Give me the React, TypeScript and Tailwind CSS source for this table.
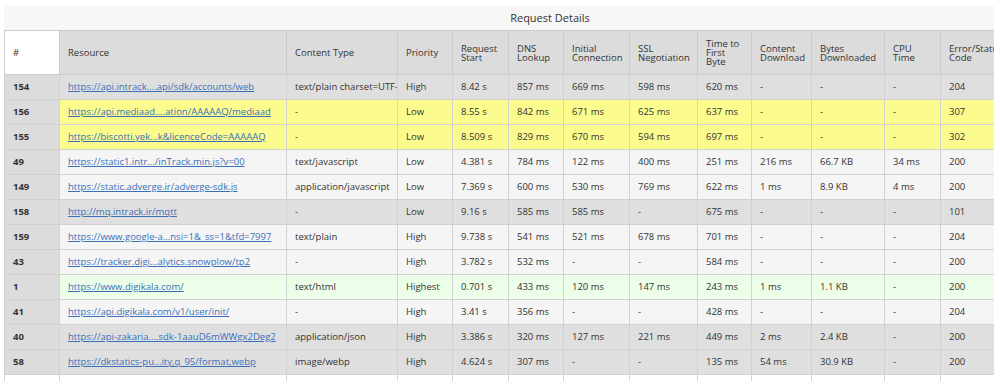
const cols = [
  { label: "#", w: 55 },
  { label: "Resource", w: 227 },
  { label: "Content Type", w: 111 },
  { label: "Priority", w: 55 },
  { label: "Request Start", w: 56 },
  { label: "DNS Lookup", w: 55 },
  { label: "Initial Connection", w: 66 },
  { label: "SSL Negotiation", w: 68 },
  { label: "Time to First Byte", w: 54 },
  { label: "Content Download", w: 60 },
  { label: "Bytes Downloaded", w: 73 },
  { label: "CPU Time", w: 56 },
  { label: "Error/Status Code", w: 156 },
];

type Row = { bg: string; cells: string[] };

const gray = "bg-[#dfdfdf]";
const light = "bg-[#f5f5f5]";
const yellow = "bg-[#fbfb8e]";
const green = "bg-[#ecfde8]";

const rows: Row[] = [
  { bg: gray, cells: ["154", "https://api.intrack....api/sdk/accounts/web", "text/plain charset=UTF-8", "High", "8.42 s", "857 ms", "669 ms", "598 ms", "620 ms", "-", "-", "-", "204"] },
  { bg: yellow, cells: ["156", "https://api.mediaad....ation/AAAAAQ/mediaad", "-", "Low", "8.55 s", "842 ms", "671 ms", "625 ms", "637 ms", "-", "-", "-", "307"] },
  { bg: yellow, cells: ["155", "https://biscotti.yek...k&licenceCode=AAAAAQ", "-", "Low", "8.509 s", "829 ms", "670 ms", "594 ms", "697 ms", "-", "-", "-", "302"] },
  { bg: light, cells: ["49", "https://static1.intr.../inTrack.min.js?v=00", "text/javascript", "Low", "4.381 s", "784 ms", "122 ms", "400 ms", "251 ms", "216 ms", "66.7 KB", "34 ms", "200"] },
  { bg: light, cells: ["149", "https://static.adverge.ir/adverge-sdk.js", "application/javascript", "Low", "7.369 s", "600 ms", "530 ms", "769 ms", "622 ms", "1 ms", "8.9 KB", "4 ms", "200"] },
  { bg: gray, cells: ["158", "http://mq.intrack.ir/mqtt", "-", "Low", "9.16 s", "585 ms", "585 ms", "-", "675 ms", "-", "-", "-", "101"] },
  { bg: light, cells: ["159", "https://www.google-a...nsi=1&_ss=1&tfd=7997", "text/plain", "High", "9.738 s", "541 ms", "521 ms", "678 ms", "701 ms", "-", "-", "-", "204"] },
  { bg: light, cells: ["43", "https://tracker.digi...alytics.snowplow/tp2", "-", "High", "3.782 s", "532 ms", "-", "-", "584 ms", "-", "-", "-", "200"] },
  { bg: green, cells: ["1", "https://www.digikala.com/", "text/html", "Highest", "0.701 s", "433 ms", "120 ms", "147 ms", "243 ms", "1 ms", "1.1 KB", "-", "200"] },
  { bg: light, cells: ["41", "https://api.digikala.com/v1/user/init/", "-", "High", "3.41 s", "356 ms", "-", "-", "428 ms", "-", "-", "-", "204"] },
  { bg: gray, cells: ["40", "https://api-zakaria....sdk-1aauD6mWWgx2Deg2", "application/json", "High", "3.386 s", "320 ms", "127 ms", "221 ms", "449 ms", "2 ms", "2.4 KB", "-", "200"] },
  { bg: gray, cells: ["58", "https://dkstatics-pu...ity,q_95/format,webp", "image/webp", "High", "4.624 s", "307 ms", "-", "-", "135 ms", "54 ms", "30.9 KB", "-", "200"] },
];

export default function App() {
  return (
    <div className="bg-white pl-1 pt-1.5 text-[#333]" style={{ fontFamily: '"Open Sans", "Noto Sans", sans-serif' }}>
      <div className="h-[375px] w-[990px] overflow-hidden">
        <div className="w-[1092px]">
          <div className="flex h-6 items-center justify-center bg-[#f7f7f7] text-[11px]">Request Details</div>
          <table className="w-[1092px] table-fixed border-collapse text-[9.5px]">
            <colgroup>
              {cols.map((c) => (
                <col key={c.label} style={{ width: c.w }} />
              ))}
            </colgroup>
            <thead>
              <tr className="h-[44px]">
                {cols.map((c, i) => (
                  <th
                    key={c.label}
                    className={
                      "border border-[#cccccc] px-2 text-left align-middle font-normal leading-[9px] " +
                      (i === 0 ? "bg-white" : "bg-[#dcdcdc]") +
                      (i === 12 ? " pr-[100px]" : "")
                    }
                  >
                    {c.label}
                  </th>
                ))}
              </tr>
            </thead>
            <tbody>
              {rows.map((r) => (
                <tr key={r.cells[0]} className="h-[25px]">
                  {r.cells.map((v, i) => (
                    <td
                      key={i}
                      className={
                        "overflow-hidden border border-[#d2d2d2] px-2 whitespace-nowrap " +
                        (i === 0 ? "bg-[#dcdcdc] font-bold" : r.bg)
                      }
                    >
                      {i === 1 ? (
                        <a href="#" className="text-[#3a70b8] underline">
                          {v}
                        </a>
                      ) : (
                        v
                      )}
                    </td>
                  ))}
                </tr>
              ))}
              <tr className="h-[25px]">
                {cols.map((c) => (
                  <td key={c.label} className="border border-[#d2d2d2] bg-white" />
                ))}
              </tr>
            </tbody>
          </table>
        </div>
      </div>
    </div>
  );
}
